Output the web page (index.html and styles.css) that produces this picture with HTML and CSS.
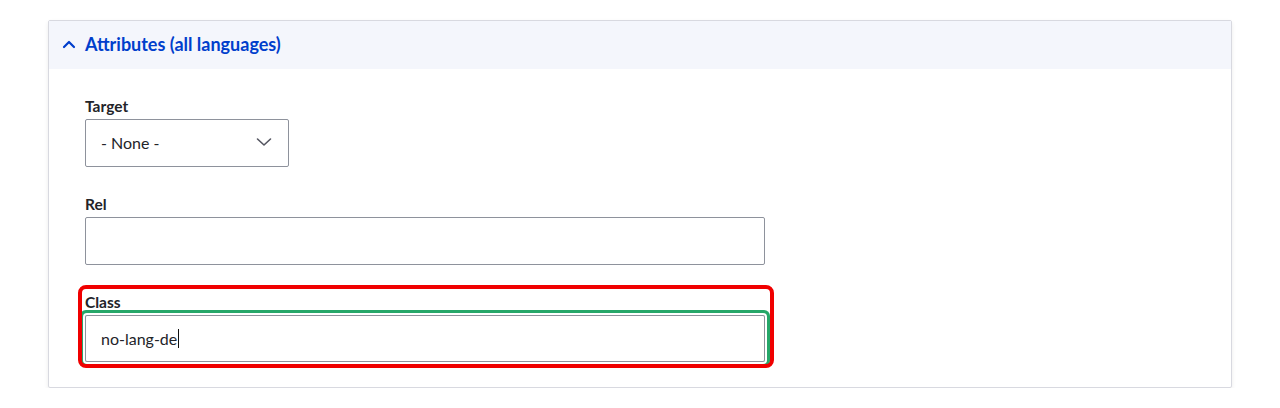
FILE: index.html
```html
<!DOCTYPE html>
<html lang="en">
<head>
<meta charset="utf-8">
<title>Attributes</title>
<link rel="stylesheet" href="styles.css">
</head>
<body>
<div class="details">
  <div class="summary">
    <svg class="summary-icon" width="14" height="10" viewBox="0 0 14 10"><path d="M2 8 L7 3 L12 8" fill="none" stroke="#003ecc" stroke-width="2.2" stroke-linecap="round" stroke-linejoin="round"/></svg>
    <span class="summary-text">Attributes (all languages)</span>
  </div>
  <div class="content">
    <div class="form-item">
      <div class="label">Target</div>
      <div class="select">
        <span>- None -</span>
        <svg width="16" height="10" viewBox="0 0 16 10"><path d="M1.5 2 L8 8 L14.5 2" fill="none" stroke="#545560" stroke-width="1.6" stroke-linecap="round" stroke-linejoin="round"/></svg>
      </div>
    </div>
    <div class="form-item">
      <div class="label">Rel</div>
      <div class="text-input"></div>
    </div>
    <div class="form-item highlighted">
      <div class="label">Class</div>
      <div class="text-input focused">no-lang-de<span class="caret"></span></div>
    </div>
  </div>
</div>
</body>
</html>
```

FILE: styles.css
```css
* { box-sizing: border-box; }
body {
  margin: 0;
  background: #fff;
  font-family: Lato, "Noto Sans", sans-serif;
  color: #232429;
}
.details {
  margin: 20px 0 0 48px;
  width: 1184px;
  height: 368px;
  border: 1px solid #d8d9e0;
  border-radius: 2px;
  box-shadow: 0 2px 4px rgba(0,0,0,0.08);
  background: #fff;
}
.summary {
  height: 48px;
  background: #f4f6fc;
  display: flex;
  align-items: center;
  padding-left: 13px;
}
.summary-icon { margin-right: 9px; margin-top: -3px; }
.summary-text {
  font-size: 18px;
  font-weight: 700;
  color: #003ecc;
  margin-top: -2px;
}
.content {
  padding: 28px 36px 0;
  display: flex;
  flex-direction: column;
  align-items: flex-start;
  gap: 28px;
}
.form-item { position: relative; }
.label {
  font-size: 15.5px;
  font-weight: 700;
  line-height: 18px;
  margin-bottom: 4px;
  color: #232429;
}
.select {
  width: 204px;
  height: 48px;
  border: 1px solid #8e929c;
  border-radius: 2px;
  display: flex;
  align-items: center;
  justify-content: space-between;
  padding: 0 16px 2px 15px;
  font-size: 16px;
  color: #232429;
}
.text-input {
  width: 680px;
  height: 48px;
  border: 1px solid #8e929c;
  border-radius: 2px;
  display: flex;
  align-items: center;
  padding-left: 15px;
  padding-bottom: 1px;
  font-size: 16px;
  color: #232429;
}
.text-input.focused {
  height: 47px;
  box-shadow: 0 0 0 2px #fff, 0 0 0 5px #26a769;
}
.caret {
  display: inline-block;
  width: 1px;
  height: 19px;
  background: #111;
  margin-left: 1px;
}
.highlighted::after {
  content: "";
  position: absolute;
  left: -7px;
  top: -8px;
  right: -9px;
  bottom: -6px;
  border: 4px solid #f00000;
  border-radius: 8px;
  pointer-events: none;
}
```
